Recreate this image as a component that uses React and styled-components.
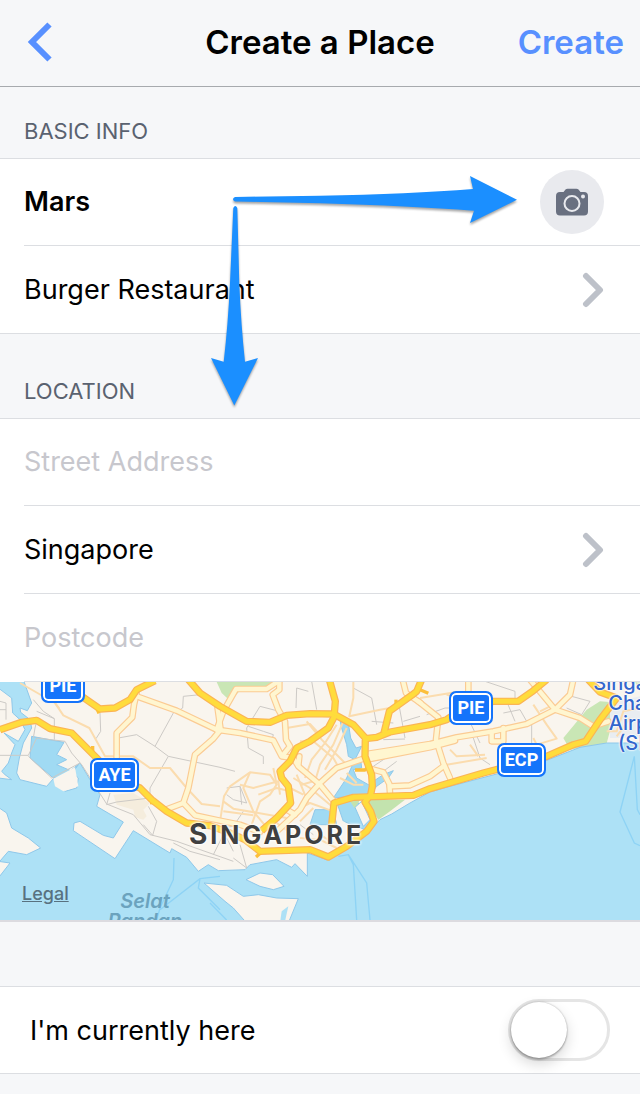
import { useState } from "react";
import styled, { createGlobalStyle } from "styled-components";

const GlobalStyle = createGlobalStyle`
  * {
    box-sizing: border-box;
  }

  body {
    margin: 0;
    background: #f6f7f9;
    color: #000;
    font-family: Inter, "Liberation Sans", sans-serif;
    font-size: 27px;
  }

  button,
  input {
    font: inherit;
    color: inherit;
  }
`;

const Page = styled.form`
  position: relative;
`;

const Header = styled.header`
  display: grid;
  grid-template-columns: 1fr auto 1fr;
  align-items: center;
  height: 87px;
  padding: 0 16px 2px;
  border-bottom: 1px solid #a7aaae;
`;

const Title = styled.h1`
  margin: 0;
  font-size: 33px;
  line-height: 40px;
  font-weight: 600;
`;

const HeaderButton = styled.button`
  display: flex;
  justify-self: ${({ $end }) => ($end ? "end" : "start")};
  padding: 0;
  border: none;
  background: none;
  color: #5890ff;
  font-size: 33px;
  line-height: 40px;
  font-weight: 600;
  cursor: pointer;
`;

const SectionTitle = styled.h2`
  display: flex;
  align-items: flex-end;
  height: ${({ $tall }) => ($tall ? 84 : 71)}px;
  margin: 0;
  padding: 0 24px 13px;
  color: #5a6270;
  font-size: 22px;
  line-height: 28px;
  font-weight: 400;
`;

const Group = styled.section`
  background: #fff;
  border-top: 1px solid #dcdee2;
`;

const Row = styled.div`
  display: flex;
  align-items: center;
  height: 88px;
  margin-left: ${({ $flush }) => ($flush ? 0 : 24)}px;
  padding-left: ${({ $flush }) => ($flush ? 24 : 0)}px;
  padding-right: 36px;
  border-bottom: 1px solid #dcdee2;

  &:first-child {
    height: 87px;
  }
`;

const PickerRow = styled(Row).attrs({ as: "button", type: "button" })`
  width: ${({ $flush }) => ($flush ? "100%" : "calc(100% - 24px)")};
  justify-content: space-between;
  border-width: 0 0 1px;
  background: none;
  text-align: left;
  cursor: pointer;
`;

const TextField = styled.input`
  flex: 1;
  min-width: 0;
  height: 60px;
  padding: 0 0 1px;
  border: none;
  outline: none;
  background: none;
  font-weight: ${({ $bold }) => ($bold ? 600 : 400)};

  &::placeholder {
    color: #c7c7cd;
    opacity: 1;
  }
`;

const PhotoButton = styled.button`
  display: flex;
  align-items: center;
  justify-content: center;
  width: 64px;
  height: 64px;
  padding: 0;
  border: none;
  border-radius: 50%;
  background: #e9eaee;
  cursor: pointer;
`;

const MapView = styled.div`
  position: relative;
  height: 240px;
  overflow: hidden;
  background: #ade1f6;
  border-bottom: 2px solid #dcdbe0;
`;

const MapCanvas = styled.svg`
  display: block;
  width: 100%;
  height: 100%;
`;

const Shield = styled.span`
  position: absolute;
  left: ${({ $x }) => $x}px;
  top: ${({ $y }) => $y}px;
  width: ${({ $w }) => $w}px;
  height: 34px;
  border: 2px solid #1574fb;
  border-radius: 7px;
  background: #1574fb;
  box-shadow: inset 0 0 0 2px #fff;
  color: #fff;
  font-family: Roboto, sans-serif;
  font-size: 18px;
  line-height: 30px;
  font-weight: 700;
  text-align: center;
`;

const CityLabel = styled.span`
  position: absolute;
  left: 189px;
  top: 136px;
  color: #404040;
  font-size: 25px;
  line-height: 32px;
  font-weight: 700;
  letter-spacing: 3px;
  text-shadow: 0 0 3px #fff, 0 0 3px #fff, 0 0 3px #fff;

  &::first-letter {
    font-size: 28px;
  }
`;

const WaterLabel = styled.span`
  position: absolute;
  left: 100px;
  top: 209px;
  width: 90px;
  color: #6ba3be;
  font-size: 20px;
  line-height: 20px;
  font-weight: 600;
  font-style: italic;
  text-align: center;
`;

const AirportLabel = styled.span`
  position: absolute;
  left: 592px;
  top: -9px;
  width: 100px;
  color: #3366cc;
  font-size: 20px;
  line-height: 20px;
  font-weight: 500;
  text-align: center;
  text-shadow: 0 0 2px #fff, 0 0 2px #fff, 0 0 2px #fff;
`;

const LegalLink = styled.a`
  position: absolute;
  left: 22px;
  top: 200px;
  color: #587180;
  font-size: 18px;
  line-height: 24px;
  font-weight: 500;
`;

const SwitchGroup = styled(Group)`
  margin-top: 64px;
  border-bottom: 1px solid #dcdee2;
`;

const SwitchRow = styled.label`
  display: flex;
  align-items: center;
  justify-content: space-between;
  height: 86px;
  padding: 0 30px;
`;

const Switch = styled.input`
  appearance: none;
  width: 102px;
  height: 62px;
  margin: 0;
  padding: 0;
  border: 3px solid ${({ checked }) => (checked ? "#4cd964" : "#e5e5e5")};
  border-radius: 31px;
  background: ${({ checked }) => (checked ? "#4cd964" : "#fff")};
  cursor: pointer;

  &::before {
    content: "";
    display: block;
    width: 56px;
    height: 56px;
    margin-left: ${({ checked }) => (checked ? 40 : 0)}px;
    border-radius: 50%;
    background: #fff;
    box-shadow: 0 0 2px rgba(0, 0, 0, 0.3), 0 2px 2px rgba(0, 0, 0, 0.2),
      0 6px 14px rgba(0, 0, 0, 0.16);
  }
`;

const Arrows = styled.svg`
  position: absolute;
  left: 200px;
  top: 160px;
  filter: drop-shadow(0 2px 1px rgba(0, 0, 0, 0.35));
  pointer-events: none;
`;

const highways = [
  "M0 155L65 133L110 127L150 152L215 165L290 240L345 300L420 330L455 365L500 400L560 435L630 443L690 465L735 485L780 520L930 515L985 537L1040 505L1100 460L1122 430L1112 400L1095 372L1112 350L1117 325L1115 290L1095 235L1096 180L1060 140L1005 110",
  "M245 55L300 93L345 90L390 65L410 35L465 8",
  "M565 5L600 45L660 85L740 130L810 133L860 112L930 107L1003 108L1006 70L988 5",
  "M1005 112L985 150L930 190L890 210L870 250L840 280L845 300L865 325L872 375L830 420L785 458",
  "M1096 182L1130 178L1170 162L1290 140L1340 125L1400 85L1480 70L1555 70L1600 38L1640 5",
  "M1152 165L1168 100L1235 52L1250 40L1265 5",
  "M995 440L1002 375L1060 358L1240 352L1290 332L1450 285L1640 235L1720 200L1757 190L1800 125L1850 60",
  "M1765 5L1800 42L1850 60",
];

const stubs = [
  "M1065 276H1095L1105 265",
  "M1188 85V65",
  "M768 537L785 522",
  "M278 204V225",
  "M1260 35L1285 46",
  "M290 90L297 106",
  "M1345 325L1350 312",
  "M450 374H462",
];

const majors = [
  "M410 45L402 80L397 118L350 165L350 250",
  "M410 55L530 98L650 155L720 165L820 187L845 235L880 240L895 265L960 320L1000 368",
  "M652 85L662 155L640 182L585 230L565 330L550 375L500 394",
  "M550 375L585 412L660 428L720 440L780 462",
  "M650 155L670 100L708 33L800 33L838 8",
  "M838 8L838 35L818 50L835 95L855 130L858 185L870 205L850 230",
  "M820 470L900 395L920 360L960 315L1010 270L1110 235L1290 205",
  "M1100 228L1290 198L1370 178L1480 160L1580 138L1665 95L1710 50L1720 5",
  "M1100 245L1290 208L1365 188",
  "M1110 272L1150 283L1168 318L1170 345",
  "M1170 325L1230 322L1290 295L1330 265",
  "M1255 70L1315 118L1308 185L1330 255L1350 300",
  "M1208 5L1218 45L1262 75",
  "M1405 5V60",
  "M1590 5L1665 95L1740 120L1780 145L1825 130",
  "M1475 165V190H1510V150",
  "M895 262L898 235",
  "M860 395L885 410",
];

const minors = [
  "M60 15L165 75L190 112L268 150L315 235H400L450 270H510L560 330L605 378L660 385",
  "M165 75L178 92",
  "M660 430L672 355L690 325L750 283L810 290L830 320L810 350L780 370L755 440",
  "M720 320L760 330L835 310L840 350",
  "M670 370L700 392L860 420M670 400L760 412",
  "M750 283L730 330L760 400L810 460",
  "M820 270L830 320M775 350L830 330L870 340",
  "M860 150L930 138L960 170",
  "M900 190L940 190L1000 240L1020 275",
  "M1030 130L1000 200L960 260L945 310",
  "M1010 140L975 195L935 245L915 300",
  "M1040 150L1010 215L975 275",
  "M920 130L965 185L1005 225L1040 260",
  "M880 300L930 330L990 380L1000 395",
  "M870 330L910 350M890 290L925 375M905 320L940 310",
  "M900 390L930 375L1000 400M900 430L940 390M830 435L880 470",
  "M1060 10L1060 60L1048 115L1140 95L1170 90",
  "M1020 300L1060 320L1090 320M1040 285L1070 315",
  "M1260 60L1370 42M1340 50L1400 70",
  "M1350 215L1370 235L1455 230M1340 260L1460 240M1410 200L1435 235",
  "M1600 80L1640 140L1670 182L1610 200L1600 180",
  "M1620 100L1650 85M1820 160L1850 160L1870 100L1920 90M1850 175L1890 120",
  "M900 480L960 485L1010 510M940 500L960 470L1000 495",
];

const streets = [
  "M0 70L18 75V125M0 95H18M100 65L130 100L163 122V185M163 122L110 100M300 105L302 160L288 182",
  "M520 105L465 205M465 205L410 170L355 180M465 205L505 235L450 330V360L350 372L320 380L330 345",
  "M505 235L660 268L705 280M550 55L548 90L525 105M550 55L600 50",
  "M0 232H85L110 180L195 190L215 225L245 260L320 378L400 410L450 470L530 490L700 550",
  "M100 180L105 150L110 130M85 235L155 300L240 255M445 385L470 430L458 472L430 440",
  "M780 85L740 150L745 210L790 235V258M780 85L830 98M745 145L790 160L820 170L815 190",
  "M890 30L888 90M890 30L925 40M935 10L950 95M1060 30L1115 60L1130 140",
  "M1195 70L1215 180M1150 185L1215 183M1120 265L1180 225M1210 130L1260 115",
  "M680 330L720 325L740 375L700 365L680 350M720 325L725 380M720 500L740 570L700 540M700 520L680 480",
  "M1280 110L1335 90L1380 90M1380 70L1440 195M1455 10L1545 40V70M1510 105L1560 95L1580 130M1520 70L1545 130M1595 130V195",
  "M1715 55L1770 70L1745 110L1700 90M1420 180L1440 240L1470 260M520 495L570 520L660 545M640 530L670 470",
  "M940 470L900 440M730 400L700 445L660 450M1115 130L1180 135M1190 250L1150 280",
];

function HighwayMap() {
  return (
    <MapCanvas viewBox="0 12 1920 714" preserveAspectRatio="xMidYMid slice" aria-hidden="true">
      <rect y="12" width="1920" height="714" fill="#f9f5ee" />
      <g fill="#c9e6b5">
        <path d="M650 12L665 45L690 68L720 38L790 30L830 12Z" />
        <path d="M1690 180L1760 95L1800 70L1865 75L1835 140L1820 196L1710 215Z" />
        <path d="M1905 12L1920 40V12Z" />
      </g>
      <path d="M1830 75L1920 55V180H1830Z" fill="#e9edf1" />
      <path d="M340 350L400 345L450 375L430 395L440 415L430 425L405 418L400 395L350 380Z" fill="#f5eddd" />
      <g fill="#ade1f6" stroke="#8fc8ea" strokeWidth="3">
        <path d="M-5 300L35 305L15 290L5 280L25 255L35 225L45 200L12 165L55 190L75 155L60 125L38 105L35 60L-5 30V5H70L95 75L82 98L60 90L62 103L90 125L95 150L70 195L58 240L50 285L60 305L140 325L160 302L195 340L230 330L235 300L212 278L240 255L270 305L300 350L290 385L370 432L340 480L310 472L240 430L222 435L220 458L345 542L400 458L510 525L515 512L560 538L595 580L625 560L655 578L735 575L750 560L830 545L875 568L885 557L922 595V525L980 545L1030 520L1085 485L1125 440L1140 425L1175 408L1230 375L1290 342L1350 325L1490 288L1640 247L1740 208L1820 195L1925 195V735H-5Z" />
        <g fill="#a0daf3">
          <path d="M95 175L192 193L170 230L200 245L170 260L212 278L235 260L210 295L160 300L90 240Z" />
          <path d="M1020 125L1045 135L1052 180L1068 210L1085 205L1065 245L1045 235L1040 200L1025 150Z" />
          <path d="M1060 255L1082 245L1085 270L1060 275L1070 300L1105 320L1150 290L1180 278L1165 300L1130 325L1110 350L1000 360L1040 300Z" />
          <path d="M945 395L1000 395L1010 440H930Z" />
          <path d="M1010 372L1065 360L1110 430L1095 455L1030 430Z" />
        </g>
      </g>
      <g fill="#c3e3ae">
        <path d="M1100 365H1215L1170 400L1135 425L1118 400Z" />
        <path d="M1050 370L1080 365L1065 392Z" />
      </g>
      <g fill="#f9f5ee" stroke="#8fc8ea" strokeWidth="3">
        <path d="M-5 388L20 405L35 450L85 480L122 510L80 530L25 520L-5 555Z" />
        <path d="M-5 550L30 555L-5 600Z" />
        <path d="M165 325L160 302L225 268L235 325L190 340Z" stroke="none" />
        <path d="M738 605L780 585L818 590L852 625L820 635L780 625Z" />
        <path d="M612 615L680 622L730 655L775 650L830 660L895 662L865 735H740L700 690L675 670Z" />
        <path d="M1065 388L1085 370L1110 425L1090 445Z" />
        <path d="M1010 440L1030 430L1075 460L1040 500L1000 510Z" stroke="none" />
      </g>
      <path d="M840 735L845 700L865 685L855 730" fill="#ade1f6" />
      <g fill="none" stroke="#8ed3f5" strokeWidth="4">
        <path d="M522 540L520 605L480 690L470 726M660 595L600 602L480 695M600 602L595 630L660 695" />
        <path d="M1015 535L1045 530L1060 560L1070 726M1045 530L1100 615L1110 726M630 675L680 726" />
        <path d="M1903 235L1860 402L1903 495L1920 503M1903 235L1912 395L1920 410" />
      </g>
      <g fill="none" strokeLinejoin="round">
        {streets.map((d) => (
          <path key={d} d={d} stroke="#cdcac6" strokeWidth="3" />
        ))}
        {minors.map((d) => (
          <path key={d} d={d} stroke="#fbdcae" strokeWidth="6" />
        ))}
        <g stroke="#fbcb93" strokeWidth="20" strokeLinecap="round">
          {majors.map((d) => (
            <path key={d} d={d} />
          ))}
        </g>
        <g stroke="#fff6d0" strokeWidth="13" strokeLinecap="round">
          {majors.map((d) => (
            <path key={d} d={d} />
          ))}
        </g>
        <g stroke="#fbb454" strokeWidth="22">
          {highways.map((d) => (
            <path key={d} d={d} />
          ))}
        </g>
        <g stroke="#fcbf3c" strokeWidth="10">
          {stubs.map((d) => (
            <path key={d} d={d} />
          ))}
        </g>
        <g stroke="#ffdc3c" strokeWidth="15">
          {highways.map((d) => (
            <path key={d} d={d} />
          ))}
        </g>
      </g>
    </MapCanvas>
  );
}

function Chevron() {
  return (
    <svg width="22" height="36" viewBox="0 0 22 36" fill="none" aria-hidden="true">
      <path
        d="M4 4L18 18L4 32"
        stroke="#bdc1c9"
        strokeWidth="6"
        strokeLinecap="round"
        strokeLinejoin="round"
      />
    </svg>
  );
}

export default function App() {
  const [name, setName] = useState("Mars");
  const [street, setStreet] = useState("");
  const [postcode, setPostcode] = useState("");
  const [isHere, setIsHere] = useState(false);

  return (
    <Page onSubmit={(e) => e.preventDefault()}>
      <GlobalStyle />
      <Header>
        <HeaderButton type="button" aria-label="Back">
          <svg width="48" height="42" viewBox="0 0 48 42" fill="none" aria-hidden="true">
            <path d="M33.500 3.500L16 21L33.500 38.500" stroke="#5890ff" strokeWidth="6" />
          </svg>
        </HeaderButton>
        <Title>Create a Place</Title>
        <HeaderButton type="submit" $end>
          Create
        </HeaderButton>
      </Header>

      <SectionTitle>BASIC INFO</SectionTitle>
      <Group>
        <Row>
          <TextField
            $bold
            aria-label="Place name"
            value={name}
            onChange={(e) => setName(e.target.value)}
          />
          <PhotoButton type="button" aria-label="Add photo">
            <svg width="32" height="28" viewBox="0 0 32 28" aria-hidden="true">
              <path
                d="M4 4H7.500L9.500 1.500Q10.300 .7 11.500 .7H20.500Q21.700 .7 22.500 1.500L24.500 4H28Q32 4 32 8V23.500Q32 27.500 28 27.500H4Q0 27.500 0 23.500V8Q0 4 4 4Z"
                fill="#697080"
              />
              <circle cx="16" cy="15.500" r="7.500" fill="none" stroke="#e9eaee" strokeWidth="2" />
              <circle cx="27" cy="8.500" r="2" fill="#e9eaee" />
            </svg>
          </PhotoButton>
        </Row>
        <PickerRow $flush>
          Burger Restaurant
          <Chevron />
        </PickerRow>
      </Group>

      <SectionTitle $tall>LOCATION</SectionTitle>
      <Group>
        <Row>
          <TextField
            aria-label="Street Address"
            placeholder="Street Address"
            value={street}
            onChange={(e) => setStreet(e.target.value)}
          />
        </Row>
        <PickerRow>
          Singapore
          <Chevron />
        </PickerRow>
        <Row>
          <TextField
            aria-label="Postcode"
            placeholder="Postcode"
            value={postcode}
            onChange={(e) => setPostcode(e.target.value)}
          />
        </Row>
      </Group>

      <MapView>
        <HighwayMap />
        <Shield $x={41} $y={-13} $w={44}>PIE</Shield>
        <Shield $x={90} $y={76} $w={49}>AYE</Shield>
        <Shield $x={449} $y={9} $w={44}>PIE</Shield>
        <Shield $x={497} $y={61} $w={49}>ECP</Shield>
        <CityLabel>SINGAPORE</CityLabel>
        <WaterLabel>Selat Pandan</WaterLabel>
        <AirportLabel>
          Singapore Changi Airport (SIN)
        </AirportLabel>
        <LegalLink href="#legal">Legal</LegalLink>
      </MapView>

      <SwitchGroup>
        <SwitchRow>
          I'm currently here
          <Switch
            type="checkbox"
            role="switch"
            checked={isHere}
            onChange={(e) => setIsHere(e.target.checked)}
          />
        </SwitchRow>
      </SwitchGroup>

      <Arrows width="330" height="260" viewBox="200 160 330 260" fill="#1b8fff" aria-hidden="true">
        <path d="M235 197L320 195.700Q410 194 473 189L470 176L517 199.700L470 223L474 210.700Q410 206 320 203.300L235 201.500Q231 199 235 197Z" />
        <path d="M233.300 208Q235.300 204 237.300 208L239.300 283Q241 325 245 361.700L258 358L234.300 405.500L211 358L223.700 361.700Q228 325 230 283Z" />
      </Arrows>
    </Page>
  );
}
